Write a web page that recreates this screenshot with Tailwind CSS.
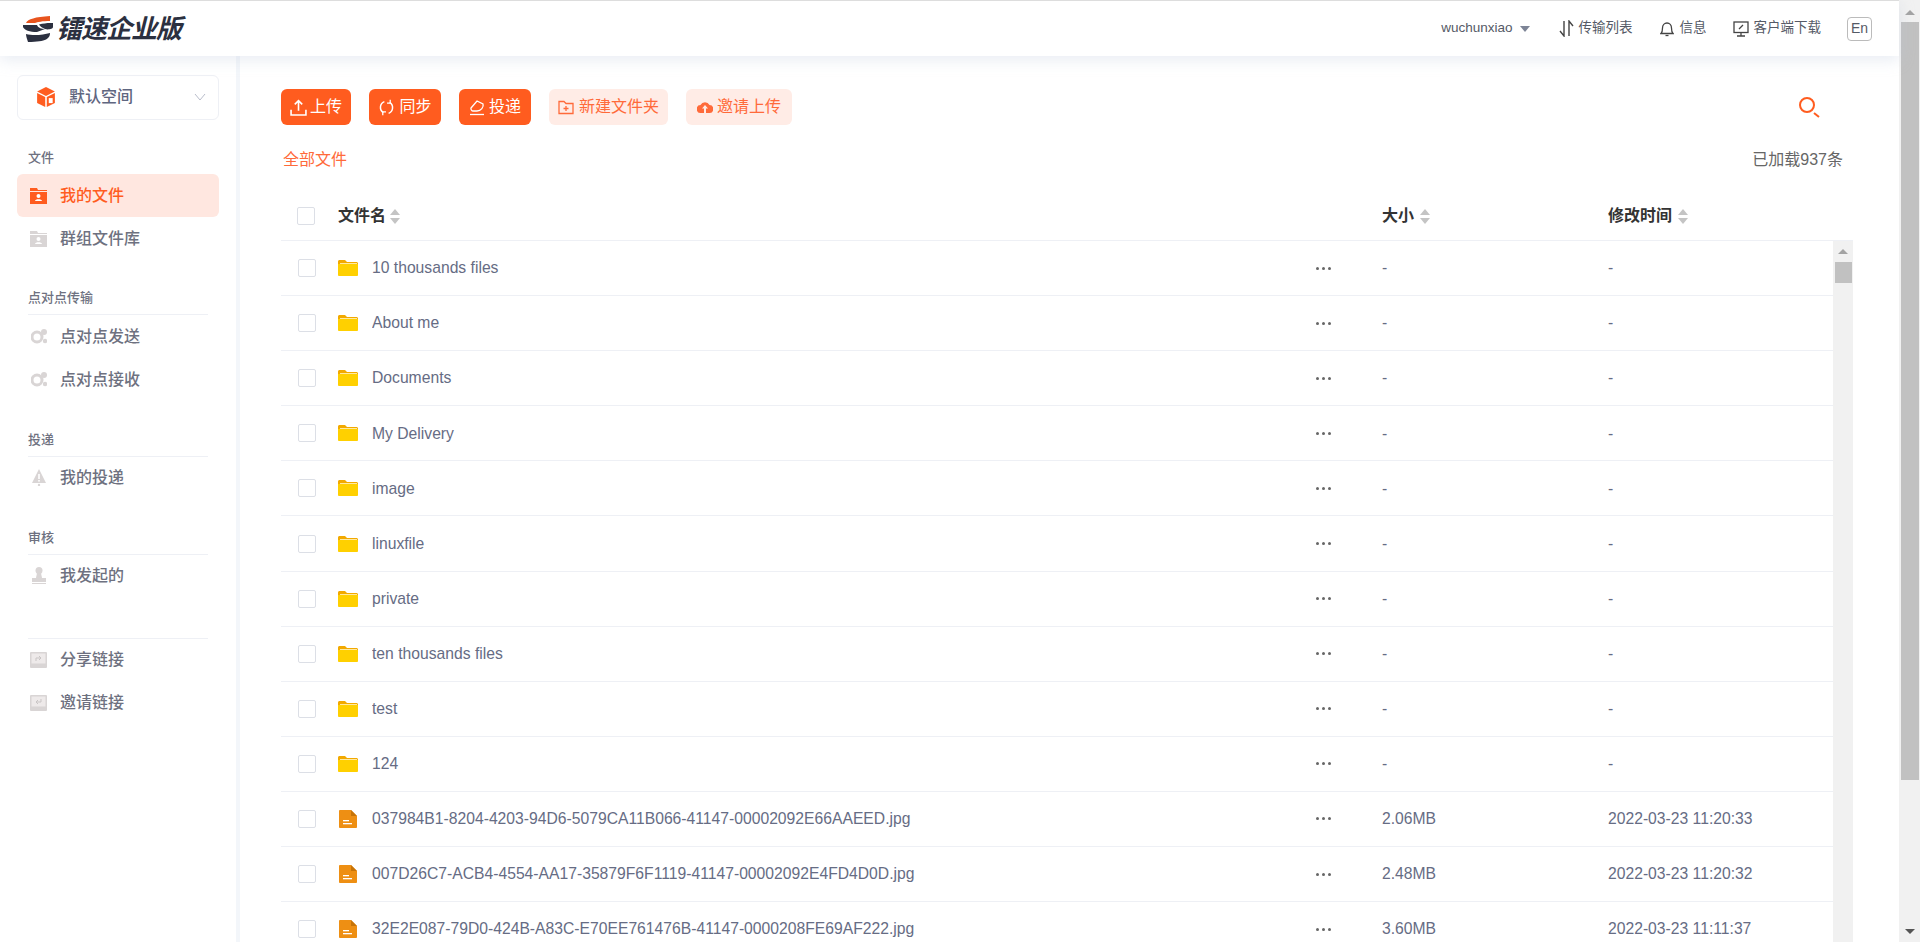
<!DOCTYPE html>
<html lang="zh-CN">
<head>
    <meta charset="UTF-8">
    <title>镭速企业版</title>
    <script src="https://cdn.jsdelivr.net/npm/@tailwindcss/browser@4"></script>
</head>
<body class="h-screen overflow-hidden bg-white flex font-['Liberation_Sans','Noto_Sans_CJK_SC',sans-serif]">
    <div class="w-[1899px] h-full flex flex-col">
        <!-- top bar -->
        <header class="relative z-10 h-[56px] shrink-0 bg-white border-t border-[#dddddd] shadow-[0_4px_14px_rgba(190,200,220,0.35)] flex items-center pl-[23px] text-[#555a66] text-[13.5px]">
            <svg class="w-[30px] h-[28px] shrink-0" viewBox="0 0 30 28">
                <path d="M3 8C5 4 12 2 27 1L27 6C20 6 14 7 12 8Z" fill="#e8541e"/>
                <path d="M0 10H14C15 13 19 14 22 14L14 17C7 17 1 15 0 12Z" fill="#2b3040"/>
                <path d="M16 9.500C20 8.500 24 8 27 8H30V12C30 14 25 15 22 14C19 13 17 11 16 9.500Z" fill="#2b3040"/>
                <path d="M3 19C10 21 20 20 27 18C27 23 24 27 5 27C4 24 3 21 3 19Z" fill="#2b3040"/>
            </svg>
            <span class="ml-[3px] w-[130px] text-[26px] leading-none font-bold italic text-[#2b3040] tracking-[-1px] whitespace-nowrap">镭速企业版</span>
            <div class="ml-auto flex items-center pr-[27px]">
                <span>wuchunxiao</span>
                <span class="ml-[7px] w-0 h-0 border-x-[5px] border-x-transparent border-t-[6px] border-t-[#7d8496]"></span>
                <svg class="ml-[29px] w-[15px] h-[17px]" viewBox="0 0 15 17" fill="none" stroke="#444" stroke-width="1.4"><path d="M5 1V16L1 11"/><path d="M10 16V1L14 6"/></svg>
                <span class="ml-[5px]">传输列表</span>
                <svg class="ml-[27px] w-[14px] h-[16px]" viewBox="0 0 14 16" fill="none" stroke="#444" stroke-width="1.3"><path d="M1 12.500C2.500 11 2.500 9 2.500 7C2.500 4 4.500 2 7 2C9.500 2 11.500 4 11.500 7C11.500 9 11.500 11 13 12.500Z"/><path d="M5.500 14.500H8.500"/></svg>
                <span class="ml-[6px]">信息</span>
                <svg class="ml-[26px] w-[16px] h-[16px]" viewBox="0 0 16 16" fill="none" stroke="#444" stroke-width="1.3"><rect x="1" y="1" width="14" height="10.500"/><path d="M8 11.500V15M4 15H12M6 8L10 4"/></svg>
                <span class="ml-[5px]">客户端下载</span>
                <span class="ml-[26px] w-[25px] h-[24px] border border-[#bbbbbb] rounded-[4px] flex items-center justify-center text-[14px]">En</span>
            </div>
        </header>

        <div class="flex-1 flex min-h-0">
            <!-- sidebar -->
            <aside class="w-[240px] shrink-0 bg-white border-r-[4px] border-[#f3f6fa] px-[17px] pt-[19px] text-[16px] text-[#6e7180]">
                <div class="h-[45px] w-[202px] border border-[#eef0f5] rounded-[6px] flex items-center pl-[18px] pr-[12px] pb-[2px] text-[#5f6680] font-medium">
                    <svg class="w-[20px] h-[20px]" viewBox="0 0 18 18"><path d="M9 0L17 4L9 8L1 4Z" fill="#ff5c1f"/><path d="M1 5.500L8.300 9V18L1 14.500Z" fill="#ff5c1f"/><path d="M9.700 9L17 5.500V14.500L9.700 18Z" fill="#ff5c1f"/><rect x="11.500" y="10" width="3.500" height="4.500" fill="#fff"/></svg>
                    <span class="ml-[13px]">默认空间</span>
                    <svg class="ml-auto w-[12px] h-[8px]" viewBox="0 0 12 8" fill="none" stroke="#b9bdcb" stroke-width="1"><path d="M1 1L6 7L11 1"/></svg>
                </div>

                <div class="mt-[25px] mx-[11px] h-[29px] text-[13px] text-[#6e7180] font-medium leading-[25px]">文件</div>
                <div class="h-[43px] bg-[#ffe7e0] rounded-[6px] flex items-center pl-[13px] text-[#ff5c1f] font-medium">
                    <svg class="w-[17px] h-[16px]" viewBox="0 0 17 16" fill="#ff5c1f"><path d="M0 0H7L8 2H17V3H0Z"/><path d="M0 4H17V16H0Z"/><circle cx="8.500" cy="8" r="2" fill="#fff"/><path d="M5 13C5 10.500 12 10.500 12 13Z" fill="#fff"/></svg>
                    <span class="ml-[13px]">我的文件</span>
                </div>
                <div class="h-[43px] flex items-center pl-[13px] font-medium">
                    <svg class="w-[17px] h-[16px]" viewBox="0 0 17 16" fill="#d9d5d5"><path d="M0 0H7L8 2H17V3H0Z"/><path d="M0 4H17V16H0Z"/><circle cx="8.500" cy="8" r="2" fill="#fff"/><path d="M5 13C5 10.500 12 10.500 12 13Z" fill="#fff"/></svg>
                    <span class="ml-[13px]">群组文件库</span>
                </div>

                <div class="mt-[26px] mx-[11px] h-[29px] border-b border-[#eef0f5] text-[13px] font-medium leading-[24px]">点对点传输</div>
                <div class="h-[43px] flex items-center pl-[14px] font-medium">
                    <svg class="w-[16px] h-[15px]" viewBox="0 0 16 15" fill="#d9d5d5"><circle cx="6" cy="8" r="5" fill="none" stroke="#d9d5d5" stroke-width="3"/><circle cx="13" cy="3" r="3"/><circle cx="14" cy="12" r="2.200"/></svg>
                    <span class="ml-[13px]">点对点发送</span>
                </div>
                <div class="h-[43px] flex items-center pl-[14px] font-medium">
                    <svg class="w-[16px] h-[15px]" viewBox="0 0 16 15" fill="#d9d5d5"><circle cx="6" cy="8" r="5" fill="none" stroke="#d9d5d5" stroke-width="3"/><circle cx="13" cy="3" r="3"/><circle cx="14" cy="12" r="2.200"/></svg>
                    <span class="ml-[13px]">点对点接收</span>
                </div>

                <div class="mt-[27px] mx-[11px] h-[29px] border-b border-[#eef0f5] text-[13px] font-medium leading-[23px]">投递</div>
                <div class="h-[43px] pb-[2px] flex items-center pl-[15px] font-medium">
                    <svg class="w-[14px] h-[17px]" viewBox="0 0 14 17" fill="#d9d5d5"><path d="M7 0L14 14H0Z"/><circle cx="7" cy="16" r="1.200"/><rect x="6.200" y="5" width="1.600" height="5" fill="#fff"/><rect x="6.200" y="11" width="1.600" height="1.600" fill="#fff"/></svg>
                    <span class="ml-[14px]">我的投递</span>
                </div>

                <div class="mt-[26px] mx-[11px] h-[29px] border-b border-[#eef0f5] text-[13px] font-medium leading-[23px]">审核</div>
                <div class="h-[43px] pb-[2px] flex items-center pl-[14px] font-medium">
                    <svg class="w-[16px] h-[17px]" viewBox="0 0 16 17" fill="#d9d5d5"><circle cx="8" cy="3.500" r="3.500"/><path d="M6 6H10L11 11H5Z"/><path d="M1 11H15V15H1Z"/><rect x="1" y="16" width="14" height="1"/></svg>
                    <span class="ml-[13px]">我发起的</span>
                </div>

                <div class="mt-[40px] mx-[11px] border-t border-[#eef0f5]"></div>
                <div class="h-[43px] pb-[2px] flex items-center pl-[13px] font-medium">
                    <svg class="w-[17px] h-[16px]" viewBox="0 0 17 16"><rect width="17" height="16" rx="1" fill="#d9d5d5"/><rect x="1.500" y="1.500" width="14" height="10" fill="#eeeaea"/><path d="M6 9V6H11M9 4L11 6L9 8" fill="none" stroke="#c9c5c5" stroke-width="1"/></svg>
                    <span class="ml-[13px]">分享链接</span>
                </div>
                <div class="h-[43px] pb-[2px] flex items-center pl-[13px] font-medium">
                    <svg class="w-[17px] h-[16px]" viewBox="0 0 17 16"><rect width="17" height="16" rx="1" fill="#d9d5d5"/><rect x="1.500" y="1.500" width="14" height="10" fill="#eeeaea"/><path d="M11 4V7H6M8 5L6 7L8 9" fill="none" stroke="#c9c5c5" stroke-width="1"/></svg>
                    <span class="ml-[13px]">邀请链接</span>
                </div>
            </aside>

            <!-- main -->
            <main class="flex-1 min-w-0 flex flex-col pl-[41px] pr-[46px] pt-[33px]">
                <div class="flex items-center gap-[18px] text-[16px] h-[36px] shrink-0">
                    <button class="h-[36px] w-[70px] bg-[#ff5c1f] text-white rounded-[6px] flex items-center justify-center gap-[3px]">
                        <svg class="w-[17px] h-[17px]" viewBox="0 0 16 16" fill="none" stroke="#fff" stroke-width="1.500"><path d="M8 11V2M4.500 5L8 1.500L11.500 5M1 10V15H15V10"/></svg>上传
                    </button>
                    <button class="h-[36px] w-[72px] bg-[#ff5c1f] text-white rounded-[6px] flex items-center justify-center gap-[4px]">
                        <svg class="w-[17px] h-[17px]" viewBox="0 0 16 16" fill="none" stroke="#fff" stroke-width="1.400"><path d="M11 3.200A5.800 5.800 0 0 1 10 13.500"/><path d="M5 12.800A5.800 5.800 0 0 1 6 2.500"/><path d="M11.500 .8V3.800H8.500M4.500 15.200V12.200H7.500" stroke-width="1.200"/></svg>同步
                    </button>
                    <button class="h-[36px] w-[72px] bg-[#ff5c1f] text-white rounded-[6px] flex items-center justify-center gap-[4px]">
                        <svg class="w-[16px] h-[17px]" viewBox="0 0 16 17" fill="none" stroke="#fff" stroke-width="1.300"><path d="M2 9L8 2L14 5C15 8 12 12 8 12H4C3 12 1.500 10.500 2 9Z"/><path d="M1 15.500H15"/></svg>投递
                    </button>
                    <button class="h-[36px] w-[119px] bg-[#ffece6] text-[#ff6a3a] rounded-[6px] flex items-center justify-center gap-[5px]">
                        <svg class="w-[16px] h-[15px]" viewBox="0 0 16 15" fill="none" stroke="#ff6a3a" stroke-width="1.300"><path d="M1 13.500V1.500H6L8 3.500H15V13.500Z"/><path d="M8 6V11M5.500 8.500H10.500"/></svg>新建文件夹
                    </button>
                    <button class="h-[36px] w-[106px] bg-[#ffece6] text-[#ff6a3a] rounded-[6px] flex items-center justify-center gap-[4px]">
                        <svg class="w-[16px] h-[12px]" viewBox="0 0 16 12" fill="#ff6a3a"><path d="M4 12A4 4 0 0 1 3.500 4A5 5 0 0 1 12.500 4A4 4 0 0 1 12 12Z"/><path d="M8 4L5 7.500H7V12H9V7.500H11Z" fill="#ffece6"/></svg>邀请上传
                    </button>
                    <svg class="ml-auto mr-[33px] w-[22px] h-[22px]" viewBox="0 0 22 22" fill="none" stroke="#ff5c1f" stroke-width="2"><circle cx="9" cy="9" r="7"/><path d="M16 17L21 21"/></svg>
                </div>

                <div class="mt-[24px] h-[22px] shrink-0 flex items-center justify-between text-[16px] pr-[10px]">
                    <span class="ml-[2px] text-[#ff6a3a]">全部文件</span>
                    <span class="text-[#666666]">已加载937条</span>
                </div>

                <!-- table head -->
                <div class="mt-[19px] h-[51px] pt-[2px] shrink-0 border-b border-[#eef0f5] flex items-center text-[16px] font-bold text-[#333333]">
                    <div class="w-[57px] pl-[16px]"><div class="w-[18px] h-[18px] border border-[#dcdfe6] rounded-[2px]"></div></div>
                    <div class="w-[1044px] flex items-center gap-[4px]">文件名<span class="flex flex-col gap-[3px]"><i class="block w-0 h-0 border-x-[5px] border-x-transparent border-b-[6px] border-b-[#c4c4c4]"></i><i class="block w-0 h-0 border-x-[5px] border-x-transparent border-t-[6px] border-t-[#c4c4c4]"></i></span></div>
                    <div class="w-[226px] flex items-center gap-[6px]">大小<span class="flex flex-col gap-[3px]"><i class="block w-0 h-0 border-x-[5px] border-x-transparent border-b-[6px] border-b-[#c4c4c4]"></i><i class="block w-0 h-0 border-x-[5px] border-x-transparent border-t-[6px] border-t-[#c4c4c4]"></i></span></div>
                    <div class="flex items-center gap-[6px]">修改时间<span class="flex flex-col gap-[3px]"><i class="block w-0 h-0 border-x-[5px] border-x-transparent border-b-[6px] border-b-[#c4c4c4]"></i><i class="block w-0 h-0 border-x-[5px] border-x-transparent border-t-[6px] border-t-[#c4c4c4]"></i></span></div>
                </div>

                <!-- table body -->
                <div class="flex-1 min-h-0 flex overflow-hidden">
                    <div id="rows" class="flex-1 min-w-0"></div>
                    <div class="w-[20px] shrink-0 bg-[#f1f1f1] flex flex-col items-center">
                        <span class="mt-[8px] w-0 h-0 border-x-[5px] border-x-transparent border-b-[5px] border-b-[#a3a3a3]"></span>
                        <div class="mt-[8px] ml-[1px] w-[17px] h-[21px] bg-[#c1c1c1]"></div>
                    </div>
                </div>
            </main>
        </div>
    </div>

    <!-- window scrollbar -->
    <div class="w-[21px] h-full bg-[#f1f1f1] flex flex-col items-center">
        <span class="mt-[10px] w-0 h-0 border-x-[5px] border-x-transparent border-b-[5px] border-b-[#a3a3a3]"></span>
        <div class="mt-[7px] w-[18px] h-[758px] bg-[#c1c1c1]"></div>
        <span class="mt-auto mb-[8px] w-0 h-0 border-x-[5px] border-x-transparent border-t-[5px] border-t-[#555555]"></span>
    </div>

    <script>
        const files = [
            { name: "10 thousands files", size: "-", time: "-", dir: true },
            { name: "About me", size: "-", time: "-", dir: true },
            { name: "Documents", size: "-", time: "-", dir: true },
            { name: "My Delivery", size: "-", time: "-", dir: true },
            { name: "image", size: "-", time: "-", dir: true },
            { name: "linuxfile", size: "-", time: "-", dir: true },
            { name: "private", size: "-", time: "-", dir: true },
            { name: "ten thousands files", size: "-", time: "-", dir: true },
            { name: "test", size: "-", time: "-", dir: true },
            { name: "124", size: "-", time: "-", dir: true },
            { name: "037984B1-8204-4203-94D6-5079CA11B066-41147-00002092E66AAEED.jpg", size: "2.06MB", time: "2022-03-23 11:20:33" },
            { name: "007D26C7-ACB4-4554-AA17-35879F6F1119-41147-00002092E4FD4D0D.jpg", size: "2.48MB", time: "2022-03-23 11:20:32" },
            { name: "32E2E087-79D0-424B-A83C-E70EE761476B-41147-0000208FE69AF222.jpg", size: "3.60MB", time: "2022-03-23 11:11:37" }
        ];

        const folderIcon = `<svg class="ml-[1px] w-[20px] h-[16px]" viewBox="0 0 20 16"><path d="M0 1.500C0 .7 .7 0 1.500 0H7L9 2H18.500C19.300 2 20 2.700 20 3.500V6H0Z" fill="#f2a900"/><path d="M0 4H20V15C20 15.500 19.500 16 19 16H1C.5 16 0 15.500 0 15Z" fill="#ffd000"/><rect x="2" y="3" width="17" height="1" fill="#ffe9a0"/></svg>`;
        const fileIcon = `<svg class="ml-[2px] w-[18px] h-[18px]" viewBox="0 0 18 18"><path d="M1 0H12L18 6V17C18 17.500 17.500 18 17 18H1C.5 18 0 17.500 0 17V1C0 .5 .5 0 1 0Z" fill="#ee8f13"/><path d="M12 0L18 6H12Z" fill="#c77408"/><rect x="4" y="10" width="6" height="1.300" fill="#fff"/><rect x="4" y="13" width="9" height="1.300" fill="#fff"/></svg>`;

        document.getElementById("rows").innerHTML = files.map(file => `
            <div class="h-[55.1px] border-b border-[#eef0f5] flex items-center text-[15.7px] text-[#666c84]">
                <div class="w-[56px] pl-[17px]"><div class="w-[18px] h-[18px] border border-[#dcdfe6] rounded-[2px]"></div></div>
                <div class="w-[35px] flex items-center">${file.dir ? folderIcon : fileIcon}</div>
                <div class="w-[944px] truncate">${file.name}</div>
                <div class="w-[66px] flex gap-[3px]"><i class="w-[3px] h-[3px] rounded-full bg-[#666666]"></i><i class="w-[3px] h-[3px] rounded-full bg-[#666666]"></i><i class="w-[3px] h-[3px] rounded-full bg-[#666666]"></i></div>
                <div class="w-[226px]">${file.size}</div>
                <div>${file.time}</div>
            </div>`).join("");
    </script>
</body>
</html>
